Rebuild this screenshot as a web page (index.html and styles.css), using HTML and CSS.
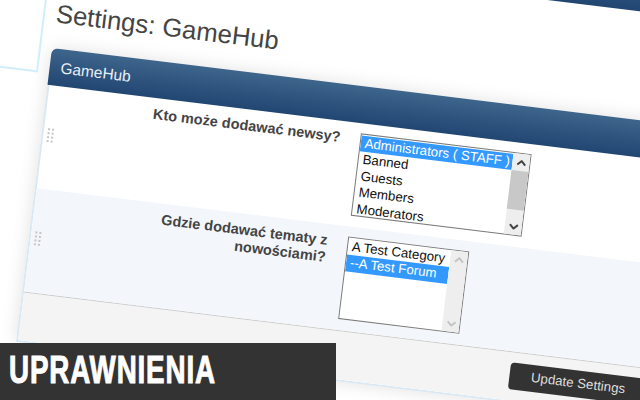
FILE: index.html
```html
<!DOCTYPE html>
<html lang="en">

<head>
    <meta charset="UTF-8">
    <title>Settings: GameHub</title>
    <link rel="stylesheet" href="styles.css">
</head>

<body>
    <div class="scene">
        <div class="top-bar"></div>
        <div class="side-box"></div>

        <div class="page">
            <h1 class="page-title">Settings: GameHub</h1>

            <div class="panel">
                <div class="panel-header">GameHub</div>

                <div class="row">
                    <div class="grip"></div>
                    <div class="row-label">Kto może dodawać newsy?</div>
                    <div class="listbox listbox-wide">
                        <div class="options">
                            <div class="option selected">Administrators ( STAFF )</div>
                            <div class="option">Banned</div>
                            <div class="option">Guests</div>
                            <div class="option">Members</div>
                            <div class="option">Moderators</div>
                        </div>
                        <div class="scrollbar">
                            <svg class="arrow" viewBox="0 0 10 6"><path d="M1 5l4-4 4 4" /></svg>
                            <div class="track"><div class="thumb"></div></div>
                            <svg class="arrow" viewBox="0 0 10 6"><path d="M1 1l4 4 4-4" /></svg>
                        </div>
                    </div>
                </div>

                <div class="row row-alt">
                    <div class="grip"></div>
                    <div class="row-label">Gdzie dodawać tematy z nowościami?</div>
                    <div class="listbox listbox-narrow">
                        <div class="options">
                            <div class="option">A Test Category</div>
                            <div class="option selected">--A Test Forum</div>
                        </div>
                        <div class="scrollbar disabled">
                            <svg class="arrow" viewBox="0 0 10 6"><path d="M1 5l4-4 4 4" /></svg>
                            <div class="track"></div>
                            <svg class="arrow" viewBox="0 0 10 6"><path d="M1 1l4 4 4-4" /></svg>
                        </div>
                    </div>
                </div>

                <div class="panel-footer">
                    <button class="save-button" type="button">Update Settings</button>
                </div>
            </div>
        </div>
    </div>

    <div class="caption"><span class="caption-text">UPRAWNIENIA</span></div>
</body>

</html>
```

FILE: styles.css
```css
html,
body {
    margin: 0;
    height: 100%;
    overflow: hidden;
    background-color: white;
    font-family: "Liberation Sans", Arial, sans-serif;
}

/* whole page is a tilted photo of the admin panel */
.scene {
    position: absolute;
    left: 52px;
    top: 48px;
    width: 1124px;
    transform: rotate(7deg);
    transform-origin: 0 0;
}

.top-bar {
    position: absolute;
    left: 0;
    top: -158px;
    width: 1126px;
    height: 50px;
    background: linear-gradient(#3e658c, #214672);
}

.side-box {
    position: absolute;
    left: -300px;
    top: -200px;
    width: 285px;
    height: 222px;
    border: 2px solid #d0eefb;
    background-color: white;
}

.page-title {
    position: absolute;
    left: 0;
    top: -52px;
    margin: 0;
    font-size: 25.7px;
    line-height: 34px;
    font-weight: normal;
    color: #444;
    white-space: nowrap;
}

.panel {
    background-color: white;
    border-radius: 6px 6px 0 0;
    border-left: 2px solid #d8e9f5;
    border-bottom: 2px solid #d8e9f5;
    box-shadow: 0 0 18px rgba(0, 0, 0, 0.12);
}

.panel-header {
    height: 37px;
    box-sizing: border-box;
    margin-left: -2px;
    padding: 0 11px;
    line-height: 37px;
    font-size: 15.5px;
    color: #e8eef4;
    border-radius: 6px 6px 0 0;
    background: linear-gradient(#3e658c, #214672);
}

.row {
    display: flex;
    align-items: flex-start;
    height: 104px;
    box-sizing: border-box;
    padding: 10px 0 0 0;
    position: relative;
}

.row-alt {
    background-color: #f3f7fb;
}

.grip {
    position: absolute;
    left: 3px;
    top: 42px;
    width: 8px;
    height: 15px;
    background-image: radial-gradient(circle, #c4c4c4 1px, transparent 1.3px);
    background-size: 4px 4px;
}

.row-label {
    width: 295px;
    margin-top: -2px;
    padding-left: 80px;
    box-sizing: border-box;
    flex-shrink: 0;
    text-align: right;
    font-size: 14.5px;
    line-height: 17px;
    font-weight: bold;
    color: #444;
}

.listbox {
    display: flex;
    height: 83px;
    box-sizing: border-box;
    border: 1px solid #7a7a7a;
    background-color: white;
    margin-left: 20px;
}

.listbox-wide {
    width: 172px;
}

.listbox-narrow {
    width: 122px;
}

.options {
    flex: 1;
    min-width: 0;
    padding-top: 1px;
    font-size: 13.33px;
    line-height: 16.4px;
    color: #111;
    overflow: hidden;
}

.option {
    padding: 0 2px 0 4px;
    white-space: nowrap;
}

.selected {
    background-color: #3399ff;
    color: white;
}

.scrollbar {
    display: flex;
    flex-direction: column;
    width: 17px;
    flex-shrink: 0;
    background-color: #eee;
}

.arrow {
    width: 10px;
    height: 6px;
    margin: 6px auto 5px;
    fill: none;
    stroke: #444;
    stroke-width: 2;
    flex-shrink: 0;
}

.disabled .arrow {
    stroke: #c4c4c4;
}

.track {
    flex: 1;
}

.thumb {
    height: 39px;
    background-color: #c8c8c8;
}

.panel-footer {
    height: 49px;
    box-sizing: border-box;
    padding-top: 10px;
    text-align: center;
    background-color: #f4f4f4;
    border-top: 1px solid #ccc;
}

.save-button {
    width: 139px;
    height: 27px;
    padding: 0 0 2px;
    border: none;
    border-radius: 4px;
    background-color: #333;
    color: #ddd;
    font-family: inherit;
    font-size: 13.33px;
}

.caption {
    position: absolute;
    left: 0;
    bottom: 0;
    width: 336px;
    height: 57px;
    box-sizing: border-box;
    padding-left: 9px;
    line-height: 55px;
    background-color: rgba(43, 43, 43, 0.96);
    color: white;
    font-size: 38px;
    font-weight: bold;
    letter-spacing: 1.2px;
    white-space: nowrap;
}

/* no condensed font installed, so squeeze the bold one */
.caption-text {
    display: inline-block;
    transform: scaleX(0.73);
    transform-origin: 0 50%;
    -webkit-text-stroke: 1px white;
}
```
